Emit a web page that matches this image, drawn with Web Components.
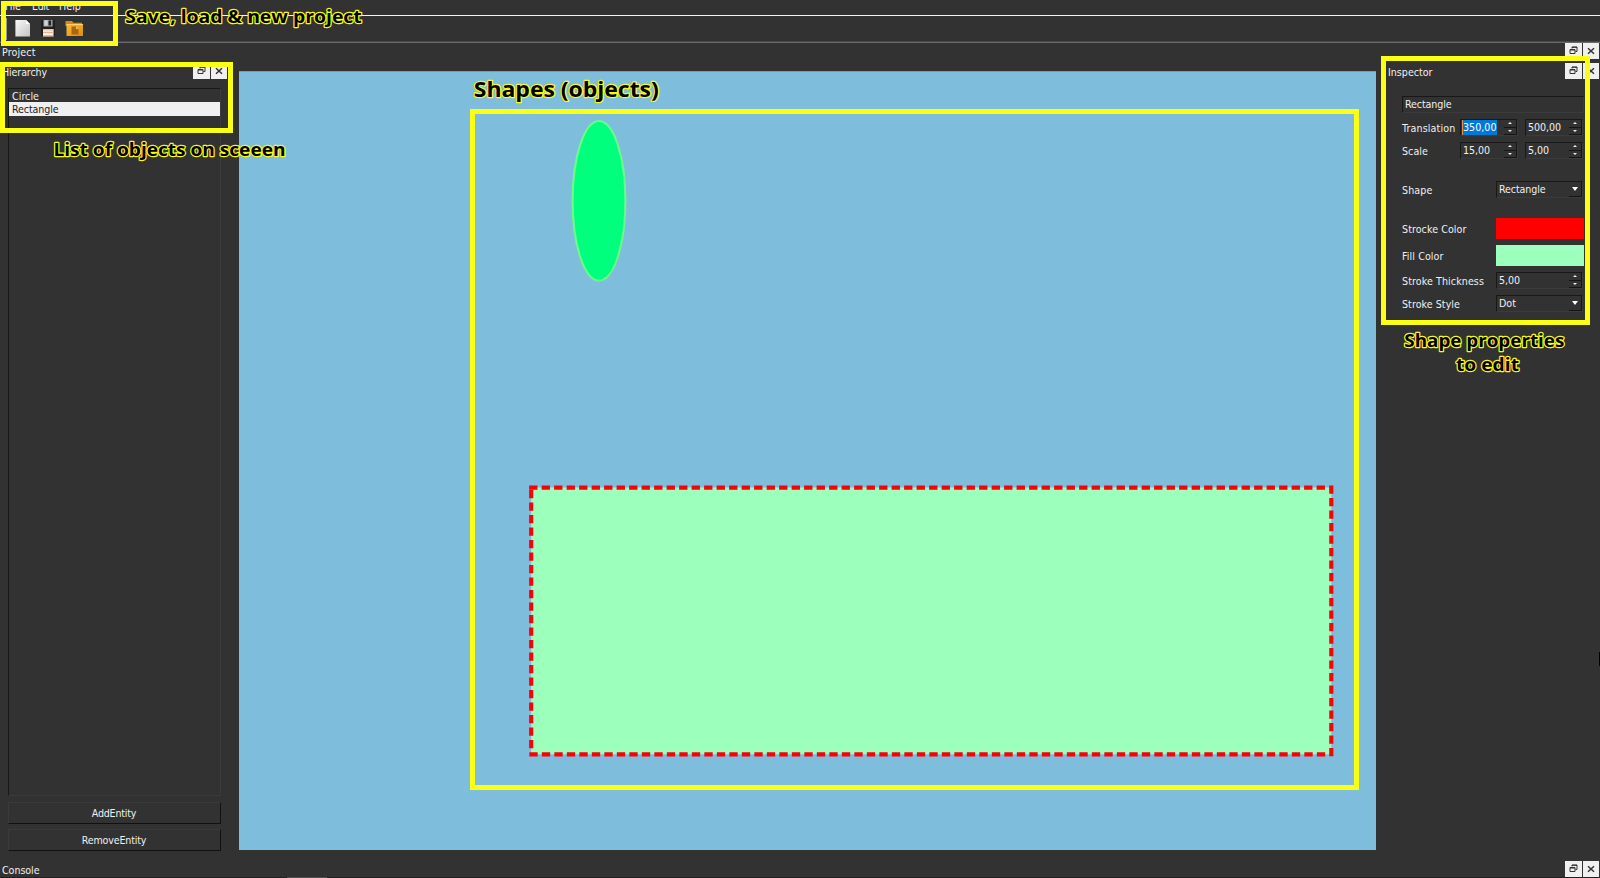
<!DOCTYPE html>
<html lang="en"><head><meta charset="utf-8"><title>Shape Editor</title>
<style>
html,body{margin:0;height:100%;overflow:hidden;background:#323232}
body{font:10.6px/14px "DejaVu Sans Condensed","DejaVu Sans",sans-serif;font-stretch:condensed;color:#f0f0f0}
</style></head><body>
<editor-window></editor-window>
<script>
const define=(name,html,init)=>customElements.define(name,class extends HTMLElement{
  connectedCallback(){
    if(this.shadowRoot)return;
    const t=document.createElement('template');
    t.innerHTML=typeof html==='function'?html(this):html;
    this.attachShadow({mode:'open'}).append(t.content.cloneNode(true));
    if(init)init(this);
  }
});

/* Text whose tracking adjusts so that it takes up the width in "fit". */
define('ui-text','<style>:host{display:inline-block;white-space:pre;flex:none}</style><span><slot></slot></span>',el=>{
  const fit=+el.getAttribute('fit');
  if(!fit)return;
  const w=el.shadowRoot.querySelector('span').getBoundingClientRect().width;
  el.style.letterSpacing=((fit-w)/el.textContent.length)+'px';
});

define('dock-buttons',`<style>
:host{display:flex;gap:1px;height:16px;flex:none}
span{width:17px;background:#f0f0f0;display:flex;align-items:center;justify-content:center}
span+span{width:16px}
svg{display:block;margin-bottom:1px}
</style>
<span><svg width="9" height="9" viewBox="0 0 9 9" fill="none" stroke="#333"><path d="M3 2.5V1H8V5.5H6.5M3 1.3H8" /><path d="M1 3.5H6V7.5H1ZM1 4H6"/></svg></span>
<span><svg width="8" height="8" viewBox="0 0 8 8" fill="none" stroke="#333" stroke-width="1.5"><path d="M1 1.2L7 6.8M7 1.2L1 6.8"/></svg></span>`);

define('dock-title',`<style>
:host{display:flex;justify-content:space-between;align-items:flex-start;height:16px;box-sizing:border-box}
slot{display:block;line-height:18px}
</style><slot></slot><dock-buttons></dock-buttons>`);

define('menu-bar',`<style>
:host{display:flex;height:15px;border-bottom:1px solid #f4f4f4;box-sizing:content-box;padding-left:5px;overflow:hidden}
ui-text{line-height:13px;height:14px}
ui-text:nth-of-type(2){margin-left:11px}ui-text:nth-of-type(3){margin-left:10px}
</style><ui-text fit="16">File</ui-text><ui-text fit="17">Edit</ui-text><ui-text fit="22">Help</ui-text>`);

define('tool-bar',`<style>
:host{display:flex;align-items:flex-start;height:27px;border-bottom:1px solid #6a6a6a;box-shadow:inset 0 -1px #484848;padding:2px 0 0 5px;box-sizing:border-box}
i{width:1px;height:22px;border-right:1px solid #999;margin-right:8px}
svg{margin-top:1px;display:block}
svg+svg{margin-left:9px}
</style><i></i>
<svg width="16" height="18" viewBox="0 0 16 18"><defs><linearGradient id="p" x2="1" y2="1"><stop stop-color="#fafafa"/><stop offset="1" stop-color="#c3c3c3"/></linearGradient></defs><path d="M.4 1H11L15 5V17.5H.4Z" fill="url(#p)"/><path d="M11 1V5H15Z" fill="#fff"/></svg>
<svg width="16" height="18" viewBox="0 0 16 18"><path d="M1 2Q1 1 2 1H14Q15 1 15 2V17H1Z" fill="#202020"/><rect x="3.5" y="1" width="9" height="6.5" fill="#aaa"/><rect x="8.5" y="1.5" width="2.6" height="5" fill="#222"/><rect x="4.5" y="1.5" width="3" height="5" fill="#d5d5d5"/><rect x="3" y="10" width="10.5" height="7.5" fill="#fff4e9"/><path d="M3 10.8H13.5M3 13.5H13.5" stroke="#e6b395" stroke-width="1.3"/><path d="M3 17H13.5" stroke="#b58365"/></svg>
<svg width="19" height="18" viewBox="0 0 19 18"><defs><linearGradient id="f" x2="1" y2="1"><stop stop-color="#f8bd35"/><stop offset="1" stop-color="#d98e12"/></linearGradient></defs><path d="M.5 2H7L8.5 3.8H17V7H.5Z" fill="#d18b18"/><path d="M1.5 5.5H18V17H1.5Z" fill="url(#f)"/><path d="M1.5 5.5H18" stroke="#ffd56a"/><path d="M6.5 7.5H11L13.5 10V15.5H6.5Z" fill="#b0640e"/><path d="M11 7.5V10H13.5Z" fill="#f9c65b"/></svg>`);

define('push-button',`<style>
:host{display:flex;align-items:center;justify-content:center;height:22px;box-sizing:border-box;border:1px solid #3a3a3a;border-right:1.5px solid #111;border-bottom:1.5px solid #111}
</style><slot></slot>`);

define('hierarchy-dock',`<style>
:host{display:flex;flex-direction:column;width:239px;box-sizing:border-box;padding:3px 12px 9px 2px}
.list{flex:1;margin:9px 6px 0 6px;border:1px solid #3b3b3b;border-top-color:#181818;border-left-color:#181818}
.row{height:13px;line-height:14px;padding-left:3px}
.sel{background:#f0f0f0;color:#1a1a1a;height:14px;line-height:14px}
push-button{margin:6px 0 0 6px;width:213px;padding-right:1px}
push-button+push-button{margin-top:5px}
</style>
<dock-title><ui-text fit="45">Hierarchy</ui-text></dock-title>
<div class="list"><div class="row"><ui-text fit="27">Circle</ui-text></div><div class="row sel"><ui-text fit="46.5">Rectangle</ui-text></div></div>
<push-button><ui-text fit="44.5">AddEntity</ui-text></push-button>
<push-button><ui-text fit="64.5">RemoveEntity</ui-text></push-button>`);

define('scene-view',`<style>
:host{display:block;width:1137px;margin-top:11px;height:779px;background:#7fbddc}
svg{display:block}
</style><svg width="1137" height="779" viewBox="239 71 1137 779">
<path d="M239 71.5H1376" stroke="#6aa0bb"/>
<ellipse cx="599" cy="200.8" rx="26.4" ry="79.8" fill="#00ff7c" stroke="#6dfa8c" stroke-width="2.1"/>
<path d="M531.2 487.6H1331.3V754.3H531.2Z" fill="#9cffbc" stroke="#fb0007" stroke-width="4.17" stroke-dasharray="4.17 8.33" stroke-linecap="square"/>
</svg>`);

define('value-box',el=>`<style>
:host{display:flex;height:17px;width:${el.getAttribute('w')}px;box-sizing:border-box;border:1px solid #3b3b3b;border-top:1.5px solid #181818;border-left:1.5px solid #181818;padding-left:2px;justify-content:space-between;align-items:center;flex:none;line-height:15px}
.spin{width:13px;height:15px;display:flex;flex-direction:column}
.spin b{height:7px;flex:1;box-sizing:border-box;border-right:1px solid #151515;border-bottom:1px solid #151515;display:flex;align-items:center;justify-content:center}
.spin b::before{content:"";border:2px solid transparent;border-bottom-color:#eee;border-top:0}
.spin b+b::before{border-bottom:0;border-top:2px solid #eee}
.combo{width:13px;height:15px;border-right:1px solid #151515;border-bottom:1px solid #151515;box-sizing:border-box;display:flex;align-items:center;justify-content:center}
.combo::before{content:"";border:3.5px solid transparent;border-top:4px solid #fff;border-bottom:0}
</style><slot></slot>${{spin:'<div class="spin"><b></b><b></b></div>',combo:'<div class="combo"></div>'}[el.getAttribute('kind')]||''}`);

define('inspector-dock',`<style>
:host{display:block;width:224px;box-sizing:border-box;padding:3px 1px 0 12px}
form{display:flex;flex-direction:column;padding:17px 0 0 14px;margin:0}
.r{display:flex;align-items:center;height:17px;margin-top:6px}
.r>ui-text{width:58px}
.r.l>ui-text{width:94px}
.r value-box+value-box{margin-left:7px}
.r.low value-box{line-height:17px}
.c{width:88px;height:21px}
.sel{background:#0078d7;color:#fff;box-shadow:-1px 0 #e58c4a}
</style>
<dock-title><ui-text fit="44.5">Inspector</ui-text></dock-title>
<form>
<value-box w="182"><ui-text fit="46.5">Rectangle</ui-text></value-box>
<div class="r"><ui-text fit="53.5">Translation</ui-text><value-box kind="spin" w="58"><ui-text class="sel" fit="33.5">350,00</ui-text></value-box><value-box kind="spin" w="58"><ui-text fit="33">500,00</ui-text></value-box></div>
<div class="r"><ui-text fit="26">Scale</ui-text><value-box kind="spin" w="58"><ui-text fit="27">15,00</ui-text></value-box><value-box kind="spin" w="58"><ui-text fit="21">5,00</ui-text></value-box></div>
<div class="r l" style="margin-top:22px"><ui-text fit="30.5">Shape</ui-text><value-box kind="combo" w="87"><ui-text fit="46.5">Rectangle</ui-text></value-box></div>
<div class="r l" style="margin-top:20px;height:21px"><ui-text fit="64.5">Strocke Color</ui-text><div class="c" style="background:#f00"></div></div>
<div class="r l" style="height:21px"><ui-text fit="41.5">Fill Color</ui-text><div class="c" style="background:#9cffbc"></div></div>
<div class="r l low"><ui-text fit="82">Stroke Thickness</ui-text><value-box kind="spin" w="87"><ui-text fit="21">5,00</ui-text></value-box></div>
<div class="r l low"><ui-text fit="58">Stroke Style</ui-text><value-box kind="combo" w="87"><ui-text fit="17">Dot</ui-text></value-box></div>
</form>`);

/* Callout frames and captions, floating over the whole window. */
define('callout-layer',`<style>
:host{position:absolute;inset:0;pointer-events:none}
svg{display:block}
text{font-family:"Open Sans","Noto Sans",sans-serif;font-stretch:normal;font-weight:700;fill:#000;stroke:#f8f815;stroke-width:2.4px;stroke-linejoin:round;paint-order:stroke}
</style><svg width="1600" height="878" viewBox="0 0 1600 878">
<g fill="none" stroke="#fbff12" stroke-width="5">
<rect x="3.5" y="3.5" width="112" height="40"/><rect x="2.5" y="64.5" width="228" height="66"/>
<rect x="472.5" y="111.5" width="884" height="676"/><rect x="1383.5" y="58.5" width="204" height="264"/></g>
<g font-size="18.5">
<text x="125.3" y="23" textLength="236.4" lengthAdjust="spacingAndGlyphs">Save, load &amp; new project</text>
<text x="53.5" y="156" textLength="232" lengthAdjust="spacingAndGlyphs">List of objects on sceeen</text>
<text x="1404.3" y="347" textLength="160" lengthAdjust="spacingAndGlyphs">Shape properties</text>
<text x="1456" y="371" textLength="63" lengthAdjust="spacingAndGlyphs">to edit</text></g>
<text x="473.8" y="97" font-size="22" textLength="185" lengthAdjust="spacingAndGlyphs">Shapes (objects)</text>
</svg>`);

define('editor-window',`<style>
:host{display:flex;flex-direction:column;position:relative;width:1600px;height:878px;overflow:hidden;background:#323232}
.project{height:17px;padding:0 1px 0 2px}
main{display:flex;height:800px}
.console{padding:0 1px 0 2px;margin-top:1px}
footer{flex:1;background:#202020;display:flex;padding-left:287px}
footer i{width:40px;background:#505050}
.caret{position:absolute;right:0;top:652px;width:1px;height:14px;background:#000}
</style>
<menu-bar></menu-bar><tool-bar></tool-bar>
<dock-title class="project"><ui-text fit="33.5">Project</ui-text></dock-title>
<main><hierarchy-dock></hierarchy-dock><scene-view></scene-view><inspector-dock></inspector-dock></main>
<dock-title class="console"><ui-text fit="37.5">Console</ui-text></dock-title>
<footer><i></i></footer><div class="caret"></div>
<callout-layer></callout-layer>`);
</script></body></html>
